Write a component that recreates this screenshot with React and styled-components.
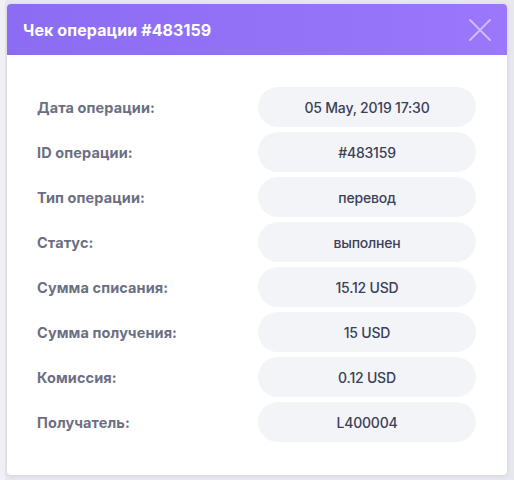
import styled, { createGlobalStyle } from 'styled-components';

const GlobalStyle = createGlobalStyle`
    html, body {
        margin: 0;
        padding: 0;
        background: #e7e7ee;
        font-family: Inter, "Noto Sans", sans-serif;
    }
`

const rows = [
    ["Дата операции:", "05 May, 2019 17:30"],
    ["ID операции:", "#483159"],
    ["Тип операции:", "перевод"],
    ["Статус:", "выполнен"],
    ["Сумма списания:", "15.12 USD"],
    ["Сумма получения:", "15 USD"],
    ["Комиссия:", "0.12 USD"],
    ["Получатель:", "L400004"],
];

const App = () => {
    return (
        <>
            <GlobalStyle />
            <Page>
                <Modal>
                    <Header>
                        <h2>Чек операции #483159</h2>
                        <CloseButton aria-label="Закрыть">
                            <svg width="22" height="22" viewBox="0 0 22 22">
                                <path d="M1 1 L21 21 M21 1 L1 21" stroke="currentColor" strokeWidth="2" strokeLinecap="round" />
                            </svg>
                        </CloseButton>
                    </Header>
                    <Body>
                        {rows.map(([label, value]) => (
                            <Row key={label}>
                                <Label>{label}</Label>
                                <Value>{value}</Value>
                            </Row>
                        ))}
                    </Body>
                </Modal>
            </Page>
        </>
    );
};

export default App;

const Page = styled.div`
    width: 514px;
    height: 480px;
    padding: 4px 7px 0;
    box-sizing: border-box;
    background: linear-gradient(90deg, #f1f1f5 0, #f1f1f5 5px, #e7e7ee 5px);
`

const Modal = styled.div`
    width: 500px;
    background: #fff;
    border-radius: 4px;
    overflow: hidden;
    box-shadow: 0 1px 4px rgba(60, 60, 100, 0.12);
`

const Header = styled.div`
    display: flex;
    align-items: center;
    justify-content: space-between;
    height: 51px;
    padding: 0 16px;
    background: linear-gradient(90deg, #8b6cf3, #9a77fb);

    h2 {
        margin: 0;
        color: #fff;
        font-size: 16px;
        font-weight: 700;
        letter-spacing: 0.1px;
    }
`

const CloseButton = styled.button`
    display: flex;
    padding: 0;
    border: none;
    background: none;
    color: rgba(255, 255, 255, 0.5);
    cursor: pointer;
`

const Body = styled.div`
    display: flex;
    flex-direction: column;
    gap: 5px;
    padding: 32px 31px 33px 30px;
`

const Row = styled.div`
    display: flex;
    align-items: center;
    justify-content: space-between;
`

const Label = styled.span`
    color: #6c6f82;
    font-size: 14.5px;
    font-weight: 700;
    letter-spacing: 0.1px;
`

const Value = styled.div`
    display: flex;
    align-items: center;
    justify-content: center;
    width: 218px;
    height: 40px;
    border-radius: 20px;
    background: #f3f4f8;
    color: #3b3f57;
    font-size: 14px;
    font-weight: 500;
    letter-spacing: -0.2px;
`
